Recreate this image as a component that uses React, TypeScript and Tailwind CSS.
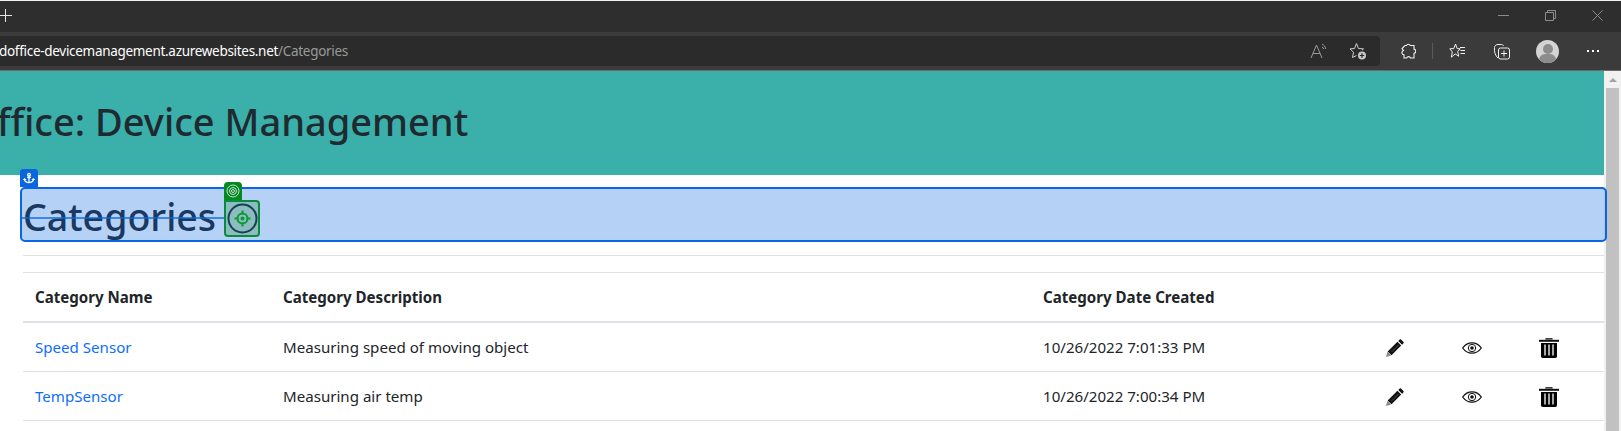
import { FaAnchor } from "react-icons/fa";

function Pencil() {
  return (
    <svg width="18" height="18" viewBox="0 0 18 18">
      <path d="M12.300 1.900l1.200-1.200c.5-.5 1.200-.5 1.700 0l2.100 2.100c.5.5.5 1.200 0 1.700l-1.200 1.200z" fill="#111" />
      <path d="M11.400 2.800l3.800 3.800-9.700 9.700-3.800-3.800z" fill="#111" />
      <path d="M5.400 13.100l7.300-7.300" stroke="#777" strokeWidth="0.6" />
      <path d="M1.400 12.800l3.800 3.800L0 18z" fill="#8a8a8a" />
    </svg>
  );
}

function Eye() {
  return (
    <svg width="20" height="12" viewBox="0 0 20 12" fill="none" stroke="#111">
      <path d="M.7 6C3 2.700 6.300.8 10 .8S17 2.700 19.300 6C17 9.300 13.700 11.200 10 11.200S3 9.300.7 6z" strokeWidth="1.300" />
      <circle cx="10" cy="6" r="3.700" strokeWidth="1" />
      <circle cx="10" cy="6" r="1.800" fill="#111" stroke="none" />
    </svg>
  );
}

function Trash() {
  return (
    <svg width="20" height="20" viewBox="0 0 20 20">
      <path d="M7 1.500V.8h6v.7" fill="none" stroke="#000" strokeWidth="1.200" />
      <rect x="0" y="1.800" width="20" height="2" fill="#111" />
      <path d="M2 5h16v13.300c0 1-.7 1.700-1.700 1.700H3.700C2.700 20 2 19.300 2 18.300z" fill="#000" />
      <path d="M6 6.500v11M10 6.500v11M14 6.500v11" stroke="#fff" strokeWidth="1.300" />
    </svg>
  );
}

function Chrome() {
  return (
    <div className="shrink-0 text-white">
      <div className="h-[32px] bg-[#2e2e2e] border-t border-[#f0f0f0] flex items-center justify-between">
        <svg width="14" height="14" viewBox="0 0 14 14" className="-ml-[1px] mt-[-2px]" fill="none" stroke="#e6e6e6" strokeWidth="1"><path d="M6.500 0v13M0 6.500h13" /></svg>
        <div className="flex items-center gap-[36px] pr-[18px] mt-[-2px]">
          <svg width="11" height="11" viewBox="0 0 11 11" stroke="#8c8c8c" fill="none"><path d="M0 5.500h11" /></svg>
          <svg width="11" height="11" viewBox="0 0 11 11" stroke="#8c8c8c" fill="none"><path d="M.5 2.500h8v8h-8zM2.500 2.500V.5h8v8h-2" /></svg>
          <svg width="11" height="11" viewBox="0 0 11 11" stroke="#8c8c8c" fill="none"><path d="M.5.5l10 10M10.500.5l-10 10" /></svg>
        </div>
      </div>
      <div className="h-[39px] bg-[#3b3b3b] border-b border-[#6b6b6b] flex items-center">
        <div className="w-[1380px] h-[30px] bg-[#2b2b2b] rounded-r-[4px] flex items-center justify-end pr-[13px] gap-[21px] overflow-hidden">
          <div className="flex-1 text-[13.5px] whitespace-nowrap tracking-[-0.3px] ml-[-1px]">
            doffice-devicemanagement.azurewebsites.net<span className="text-[#9a9a9a]">/Categories</span>
          </div>
          <svg width="18" height="16" viewBox="0 0 18 16" fill="none" stroke="#9a9a9a" strokeWidth="1"><path d="M1 15L6.500 2 12 15M3 10.500h7M12 1c2 1 3.500 2.500 3.500 5M12 4c1 .3 1.500 1 1.600 2" /></svg>
          <svg width="18" height="18" viewBox="0 0 18 18" fill="none" stroke="#d0d0d0" strokeWidth="1"><path d="M7.500 1.500l2 5 5 .4-1.500 1.300M7.500 1.500l-2 5-4.500.4 3.500 3.300-1 5.300 4-2" /><circle cx="13" cy="13.500" r="4" fill="#c8c8c8" stroke="none" /><path d="M13 11.300v4.400M10.800 13.500h4.400" stroke="#2b2b2b" strokeWidth="1.200" /></svg>
        </div>
        <div className="flex items-center pl-[20px]">
          <svg width="16" height="17" viewBox="0 0 16 17" fill="none" stroke="#f0f0f0" strokeWidth="1.100"><path d="M5 2.500h1.500a2 2 0 0 1 3.700 0H14v3.600a2.200 2.200 0 0 1 0 4.300v4.600h-3.500a2 2 0 0 0-3.800 0H4v-3.200a2.200 2.200 0 0 1-1-.3 2.200 2.200 0 0 1 .5-4L2 5.500z" /></svg>
          <div className="w-px h-[16px] bg-[#5a5a5a] ml-[16px]" />
          <svg className="ml-[16px]" width="17" height="16" viewBox="0 0 17 16" fill="none" stroke="#f0f0f0" strokeWidth="1"><path d="M6.500 1l1.700 4.600 3 .2-2.500 2.800 1 4.600-3.500-2.300-3.800 3.300.9-5.300L.8 5.800l4-.2zM11 4.500h5M11.500 7.500h4.500M11.500 10.500h4.500" /></svg>
          <svg className="ml-[27px]" width="17" height="17" viewBox="0 0 17 17" fill="none" stroke="#f0f0f0" strokeWidth="1"><path d="M5 15C2.500 13 1 9 1.500 4.500 2 2.500 3 1.500 5 1.500h3.500c1 0 1.800.7 2 1.500" /><rect x="5.500" y="5" width="11" height="11" rx="2" /><path d="M11 7.500v6M8 10.500h6" /></svg>
          <div className="w-[23px] h-[23px] rounded-full bg-[#d4d4d4] overflow-hidden relative shrink-0 ml-[26px]">
            <div className="absolute left-[6.500px] top-[4px] w-[10px] h-[10px] rounded-full bg-[#8d8d8d]" />
            <div className="absolute left-[3px] top-[14.500px] w-[17px] h-[12px] rounded-full bg-[#8d8d8d]" />
          </div>
          <div className="flex gap-[3px] ml-[28px]">
            <div className="w-[2px] h-[2px] bg-white" />
            <div className="w-[2px] h-[2px] bg-white" />
            <div className="w-[2px] h-[2px] bg-white" />
          </div>
        </div>
      </div>
    </div>
  );
}

function Row({ name, desc, date }: { name: string; desc: string; date: string }) {
  return (
    <div className="grid grid-cols-[248px_760px_1fr] h-[49px] border-b border-[#dee2e6] items-center pl-[12px] text-[15.1px] text-[#212529]">
      <a className="text-[#0d6efd]">{name}</a>
      <div>{desc}</div>
      <div className="flex items-center">
        <div className="w-[313px]">{date}</div>
        <div className="grid grid-cols-[77px_77px_77px] w-[231px] mt-[2px] justify-items-center text-black items-center">
          <Pencil />
          <Eye />
          <Trash />
        </div>
      </div>
    </div>
  );
}

export default function App() {
  return (
    <div className="w-[1621px] h-[431px] overflow-hidden flex flex-col bg-white font-['Noto_Sans',sans-serif]">
      <Chrome />
      <div className="flex flex-1 min-h-0">
        <div className="flex-1 min-w-0">
          <header className="h-[104px] bg-[#3bafa9] flex items-center overflow-hidden">
            <h1 className="text-[38px] text-[#1f2a30] font-medium whitespace-nowrap ml-[-3px] mb-[4px]">ffice: Device Management</h1>
          </header>
          <div className="pl-[23px] pt-[12px] relative">
            <h2 className="h-[55px] text-[37.5px] leading-[59px] text-[#212529] font-medium">
              Categories
            </h2>
            <div className="absolute z-10 left-[20px] top-[12px] right-[-3px] h-[55px] border-2 border-[#0a66e0] rounded-[5px] bg-[#0a66e0]/30" />
            <div className="absolute z-10 left-[20px] top-[-6px] w-[18px] h-[18px] bg-[#0a66e0] rounded-t-[3px] flex items-center justify-center text-white">
              <FaAnchor size={12} />
            </div>
            <div className="absolute z-10 left-[22px] top-[42px] w-[202px] h-[2px] bg-[#0a66e0]/70" />
            <div className="absolute z-10 left-[224px] top-[7px] w-[18px] h-[18px] bg-[#008a20] rounded-t-[4px] flex items-center justify-center">
              <svg width="14" height="14" viewBox="0 0 14 14" fill="none" stroke="#c8dcd2" strokeWidth="1"><circle cx="7" cy="7" r="6" /><circle cx="7" cy="7" r="3.500" /><circle cx="7" cy="7" r="1.500" /></svg>
            </div>
            <div className="absolute z-10 left-[224px] top-[25px] w-[36px] h-[37px] bg-[#8bbcc0] border-2 border-[#0a8a3c] rounded-b-[4px] rounded-tr-[4px] flex items-center justify-center">
              <svg width="31" height="31" viewBox="0 0 31 31" fill="none"><circle cx="15.500" cy="15.500" r="14" stroke="#17404f" strokeWidth="2" /><circle cx="15.500" cy="15.500" r="5" stroke="#0d9a35" strokeWidth="2" /><circle cx="15.500" cy="15.500" r="2" fill="#0d9a35" /><path d="M15.500 7.500v4M15.500 19.500v4M7.500 15.500h4M19.500 15.500h4" stroke="#0d9a35" strokeWidth="2" /></svg>
            </div>
            <div className="border-t border-[#e0e0e0] mt-[13px]" />
            <div className="border-t border-[#dee2e6] mt-[16px]">
              <div className="grid grid-cols-[248px_760px_1fr] h-[50px] border-b-2 border-[#dee2e6] items-center pl-[12px] text-[15.1px] font-bold text-[#212529]">
                <div>Category Name</div>
                <div>Category Description</div>
                <div>Category Date Created</div>
              </div>
              <Row name="Speed Sensor" desc="Measuring speed of moving object" date="10/26/2022 7:01:33 PM" />
              <Row name="TempSensor" desc="Measuring air temp" date="10/26/2022 7:00:34 PM" />
            </div>
          </div>
        </div>
        <div className="w-[17px] bg-[#f1f1f1] shrink-0 flex flex-col items-center pt-[7px]">
          <div className="w-0 h-0 border-x-[4px] border-x-transparent border-b-[4px] border-b-[#a3a3a3] mb-[6px]" />
          <div className="w-[13px] flex-1 bg-[#c1c1c1]" />
        </div>
      </div>
    </div>
  );
}
